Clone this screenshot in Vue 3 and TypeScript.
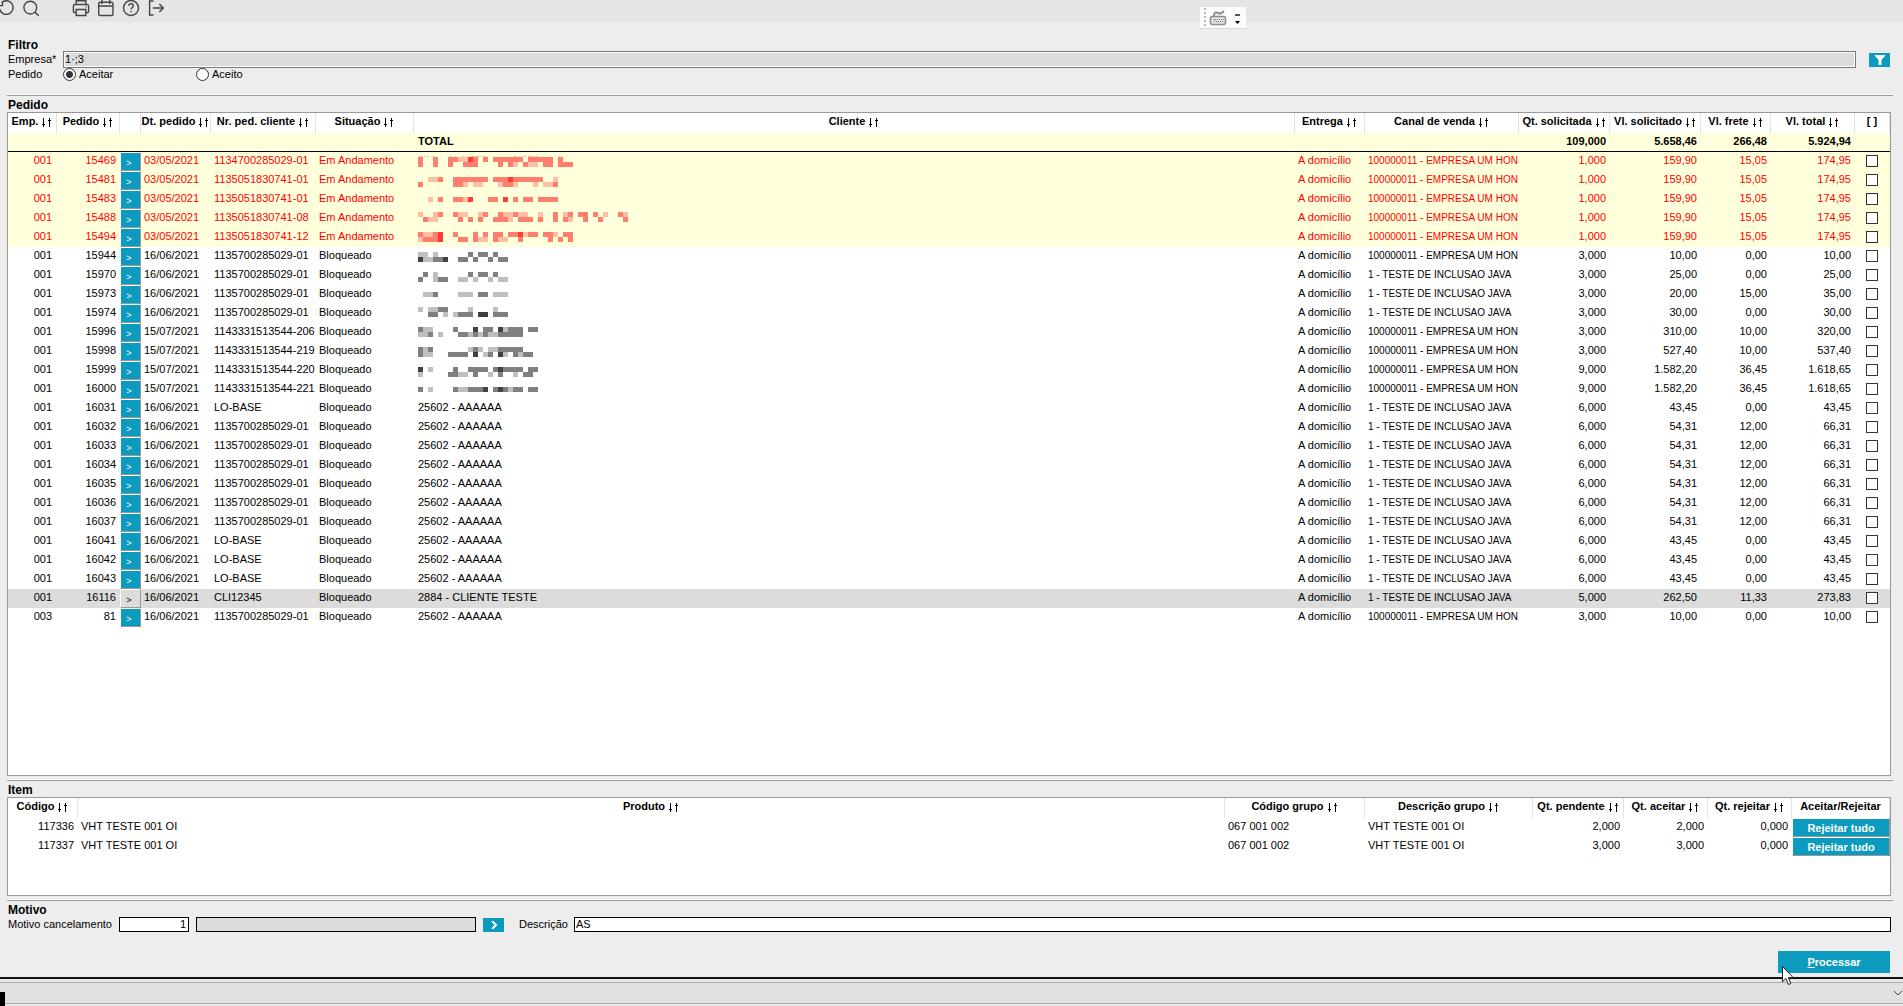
<script setup lang="ts">
import { ref } from 'vue'

interface Order {
  emp: string
  num: string
  date: string
  ref: string
  status: string
  client: string
  channel: string
  qty: string
  value: string
  freight: string
  total: string
}

interface Column {
  key: string
  label: string
  sortable: boolean
}

// Censored customer names: one digit per 5px block, 1 = light, 2 = medium, 3 = dark
interface Mosaic {
  top: number
  lines: string[]
}

const OI = '100000011 - EMPRESA UM HON'
const JAVA = '1 - TESTE DE INCLUSAO JAVA'
const A = '25602 - AAAAAA'
const R = '1135700285029-01'

function order(line: string, client: string, channel: string): Order {
  const [emp, num, date, refNo, status, qty, value, freight, total] = line.split('|')
  return { emp, num, date, ref: refNo, status, client, channel, qty, value, freight, total }
}

const orders: Order[] = [
  order('001|15469|03/05/2021|1134700285029-01|Em Andamento|1,000|159,90|15,05|174,95', '', OI),
  order('001|15481|03/05/2021|1135051830741-01|Em Andamento|1,000|159,90|15,05|174,95', '', OI),
  order('001|15483|03/05/2021|1135051830741-01|Em Andamento|1,000|159,90|15,05|174,95', '', OI),
  order('001|15488|03/05/2021|1135051830741-08|Em Andamento|1,000|159,90|15,05|174,95', '', OI),
  order('001|15494|03/05/2021|1135051830741-12|Em Andamento|1,000|159,90|15,05|174,95', '', OI),
  order(`001|15944|16/06/2021|${R}|Bloqueado|3,000|10,00|0,00|10,00`, '', OI),
  order(`001|15970|16/06/2021|${R}|Bloqueado|3,000|25,00|0,00|25,00`, '', JAVA),
  order(`001|15973|16/06/2021|${R}|Bloqueado|3,000|20,00|15,00|35,00`, '', JAVA),
  order(`001|15974|16/06/2021|${R}|Bloqueado|3,000|30,00|0,00|30,00`, '', JAVA),
  order('001|15996|15/07/2021|1143331513544-206|Bloqueado|3,000|310,00|10,00|320,00', '', OI),
  order('001|15998|15/07/2021|1143331513544-219|Bloqueado|3,000|527,40|10,00|537,40', '', OI),
  order('001|15999|15/07/2021|1143331513544-220|Bloqueado|9,000|1.582,20|36,45|1.618,65', '', OI),
  order('001|16000|15/07/2021|1143331513544-221|Bloqueado|9,000|1.582,20|36,45|1.618,65', '', OI),
  order('001|16031|16/06/2021|LO-BASE|Bloqueado|6,000|43,45|0,00|43,45', A, JAVA),
  order(`001|16032|16/06/2021|${R}|Bloqueado|6,000|54,31|12,00|66,31`, A, JAVA),
  order(`001|16033|16/06/2021|${R}|Bloqueado|6,000|54,31|12,00|66,31`, A, JAVA),
  order(`001|16034|16/06/2021|${R}|Bloqueado|6,000|54,31|12,00|66,31`, A, JAVA),
  order(`001|16035|16/06/2021|${R}|Bloqueado|6,000|54,31|12,00|66,31`, A, JAVA),
  order(`001|16036|16/06/2021|${R}|Bloqueado|6,000|54,31|12,00|66,31`, A, JAVA),
  order(`001|16037|16/06/2021|${R}|Bloqueado|6,000|54,31|12,00|66,31`, A, JAVA),
  order('001|16041|16/06/2021|LO-BASE|Bloqueado|6,000|43,45|0,00|43,45', A, JAVA),
  order('001|16042|16/06/2021|LO-BASE|Bloqueado|6,000|43,45|0,00|43,45', A, JAVA),
  order('001|16043|16/06/2021|LO-BASE|Bloqueado|6,000|43,45|0,00|43,45', A, JAVA),
  order('001|16116|16/06/2021|CLI12345|Bloqueado|5,000|262,50|11,33|273,83', '2884 - CLIENTE TESTE', JAVA),
  order(`003|81|16/06/2021|${R}|Bloqueado|3,000|10,00|0,00|10,00`, A, OI),
]

const mosaics: Record<string, Mosaic> = {
  '15469': { top: 5, lines: ['2..2..221132.2.222222.22222.2', '2..2..2..222....2.21.211.22.222'] },
  '15481': { top: 6, lines: ['..112..2222222.2223222222..1', '2......221.11...1221...1.112'] },
  '15483': { top: 7, lines: ['..1.2..2213...22.3.2.22.2222'] },
  '15488': { top: 3, lines: ['1..12..211..12..211211..1..2.12.22.2.1..21', '.211....2.2.2..2221.222.2..2.21..2..2....2'] },
  '15494': { top: 4, lines: ['21123..2...2.2.22.223122.221.22', '12223...22.211.211..2.....2.2.2'] },
  '15944': { top: 5, lines: ['11.1......2.22.2', '311223..22.2..2.22'] },
  '15970': { top: 6, lines: ['.2.1......2.22.2', '2..122..11.1..1.11'] },
  '15973': { top: 7, lines: ['.112....111.22.111'] },
  '15974': { top: 3, lines: ['1.1122....1....1', '..22.1.1222.33.222'] },
  '15996': { top: 4, lines: ['211....2...3.22.31222.22', '112.1...2212121122222'] },
  '15998': { top: 5, lines: ['212.......121.1122222', '211...2222.3.12.31.2122'] },
  '15999': { top: 6, lines: ['3.1....2..2222.232222.22', '1.....2211.2..1.2..1.22'] },
  '16000': { top: 7, lines: ['2.1....2112223.232122.22'] },
}

const darkPalette = ['#bfbfbf', '#808080', '#404040']
const redPalette = ['#ffbea6', '#ff7f6e', '#ff3b35']

function blocks(o: Order) {
  const mosaic = mosaics[o.num]
  if (!mosaic) return []
  const palette = o.status === 'Em Andamento' ? redPalette : darkPalette
  const out: { x: number; y: number; fill: string }[] = []
  mosaic.lines.forEach((line, row) => {
    ;[...line].forEach((ch, col) => {
      const level = Number(ch)
      if (level > 0) out.push({ x: col * 5, y: mosaic.top + row * 5, fill: palette[level - 1] })
    })
  })
  return out
}

const orderColumns: Column[] = [
  { key: 'emp', label: 'Emp.', sortable: true },
  { key: 'num', label: 'Pedido', sortable: true },
  { key: 'open', label: '', sortable: false },
  { key: 'date', label: 'Dt. pedido', sortable: true },
  { key: 'ref', label: 'Nr. ped. cliente', sortable: true },
  { key: 'status', label: 'Situação', sortable: true },
  { key: 'client', label: 'Cliente', sortable: true },
  { key: 'delivery', label: 'Entrega', sortable: true },
  { key: 'channel', label: 'Canal de venda', sortable: true },
  { key: 'qty', label: 'Qt. solicitada', sortable: true },
  { key: 'value', label: 'Vl. solicitado', sortable: true },
  { key: 'freight', label: 'Vl. frete', sortable: true },
  { key: 'total', label: 'Vl. total', sortable: true },
  { key: 'check', label: '[ ]', sortable: false },
]

const itemColumns: Column[] = [
  { key: 'code', label: 'Código', sortable: true },
  { key: 'product', label: 'Produto', sortable: true },
  { key: 'group', label: 'Código grupo', sortable: true },
  { key: 'groupname', label: 'Descrição grupo', sortable: true },
  { key: 'pending', label: 'Qt. pendente', sortable: true },
  { key: 'accept', label: 'Qt. aceitar', sortable: true },
  { key: 'reject', label: 'Qt. rejeitar', sortable: true },
  { key: 'action', label: 'Aceitar/Rejeitar', sortable: false },
]

const items = [
  { code: '117336', qty: '2,000' },
  { code: '117337', qty: '3,000' },
]

// Thin down and up arrows drawn pixel by pixel on a 12x9 grid
const sortPath = 'M3 0h1v9h-1zM2 6h3v1h-3zM9 0h1v9h-1zM8 2h3v1h-3z'

const mode = ref('aceitar')
const company = ref('1·;3')
const reasonCode = ref('1')
const reasonName = ref('')
const description = ref('AS')
const selected = ref('16116')
const checked = ref<string[]>([])
</script>

<template>
  <div class="page">
    <header class="toolbar">
      <button class="tool" type="button" aria-label="Desfazer">
        <svg width="18" height="18" viewBox="0 0 18 18"><path d="M4.6 3.6A6.8 6.8 0 1 1 2.6 10" /><path d="M1.5 6.6h4V2.5" /></svg>
      </button>
      <button class="tool" type="button" aria-label="Pesquisar">
        <svg width="18" height="18" viewBox="0 0 18 18"><circle cx="8.3" cy="8.6" r="6.4" /><path d="M13 13.4l3.8 3.3" /></svg>
      </button>
      <span class="tool-gap"></span>
      <button class="tool" type="button" aria-label="Imprimir">
        <svg width="18" height="18" viewBox="0 0 18 18"><path d="M4.2 5.5V1.7h9.6v3.8M4.2 13.5H2.4a1 1 0 0 1-1-1V7a1.5 1.5 0 0 1 1.5-1.5h12.2A1.5 1.5 0 0 1 16.6 7v5.5a1 1 0 0 1-1 1h-1.8" /><path d="M4.2 10.5h9.6v6H4.2z" /><path d="M13.5 7.8h1" /></svg>
      </button>
      <button class="tool" type="button" aria-label="Calendário">
        <svg width="18" height="18" viewBox="0 0 18 18"><rect x="1.7" y="3.2" width="14.3" height="13.3" rx="1.5" /><path d="M1.7 7h14.3M5 1v4M12.7 1v4" /></svg>
      </button>
      <button class="tool" type="button" aria-label="Ajuda">
        <svg width="18" height="18" viewBox="0 0 18 18"><circle cx="9" cy="9" r="7.5" /><path d="M6.8 6.8c0-1.3 1-2.1 2.3-2.1s2.2.8 2.2 2c0 1.7-2.2 1.8-2.2 3.7M9.1 12v1.3" /></svg>
      </button>
      <button class="tool" type="button" aria-label="Sair">
        <svg width="18" height="18" viewBox="0 0 18 18"><path d="M6.5 2H2.6v14h3.9M5.8 9h10.4M12.3 5l4 4-4 4" /></svg>
      </button>
    </header>

    <div class="floating" aria-hidden="true">
      <svg width="46" height="21" viewBox="0 0 46 21">
        <path d="M5 1v20" stroke="#b8b8b8" stroke-width="2" stroke-dasharray="2 2" />
        <path d="M14 9c0-4 2-4 4-3s3 1 6-2" fill="none" stroke="#8c8c8c" stroke-width="2" />
        <rect x="10.5" y="9.500" width="15" height="8" rx="2" fill="#e4e4e4" stroke="#8c8c8c" stroke-width="1.5" />
        <path d="M13 12.500h11M14 14.500h9" stroke="#777" stroke-dasharray="1 1" />
        <path d="M35 8h5" stroke="#555" stroke-width="2" />
        <path d="M35 14h5l-2.500 3z" fill="#000" />
      </svg>
    </div>

    <main class="content">
      <section>
        <h2 class="short">Filtro</h2>
        <div class="company-row">
          <label for="company">Empresa*</label>
          <input id="company" v-model="company" class="company" type="text" />
          <button class="filter" type="button" aria-label="Filtrar">
            <svg width="10" height="10" viewBox="0 0 10 10"><path d="M0 0h10v1L6.5 5v5h-3V5L0 1z" fill="#fff" /></svg>
          </button>
        </div>
        <div class="radio-row">
          <span class="radio-title">Pedido</span>
          <label class="radio"><input v-model="mode" type="radio" name="mode" value="aceitar" />Aceitar</label>
          <label class="radio"><input v-model="mode" type="radio" name="mode" value="aceito" />Aceito</label>
        </div>
      </section>
      <hr class="wide-gap" />

      <section class="orders">
        <h2>Pedido</h2>
        <div class="grid grow">
          <table>
            <colgroup>
              <col v-for="c in orderColumns" :key="c.key" :class="'w-' + c.key" />
            </colgroup>
            <thead>
              <tr>
                <th v-for="c in orderColumns" :key="c.key">
                  {{ c.label }}
                  <svg v-if="c.sortable" class="sort" width="12" height="9" viewBox="0 0 12 9" shape-rendering="crispEdges"><path :d="sortPath" /></svg>
                </th>
              </tr>
              <tr class="totals">
                <td colspan="6"></td>
                <td class="client">TOTAL</td>
                <td colspan="2"></td>
                <td class="num">109,000</td>
                <td class="num">5.658,46</td>
                <td class="num">266,48</td>
                <td class="num">5.924,94</td>
                <td></td>
              </tr>
            </thead>
            <tbody>
              <tr
                v-for="o in orders"
                :key="o.num"
                :class="{ pending: o.status === 'Em Andamento', selected: o.num === selected }"
                @click="selected = o.num"
              >
                <td class="num emp">{{ o.emp }}</td>
                <td class="num">{{ o.num }}</td>
                <td class="cell-button"><button class="open" type="button">&gt;</button></td>
                <td>{{ o.date }}</td>
                <td>{{ o.ref }}</td>
                <td>{{ o.status }}</td>
                <td class="client" :class="{ hidden: mosaics[o.num] }">
                  <svg v-if="mosaics[o.num]" class="mosaic" width="210" height="19" shape-rendering="crispEdges" role="img" aria-label="Cliente oculto">
                    <rect v-for="(b, i) in blocks(o)" :key="i" :x="b.x" :y="b.y" width="5" height="5" :fill="b.fill" />
                    <path v-if="o.num === '15469'" d="M1 4.5h148" stroke="#ffbea6" stroke-dasharray="4 1 5 2 3 16 1 4 1 6 3 2 1 3" />
                  </svg>
                  <template v-else>{{ o.client }}</template>
                </td>
                <td>A domicílio</td>
                <td class="channel">{{ o.channel }}</td>
                <td class="num">{{ o.qty }}</td>
                <td class="num">{{ o.value }}</td>
                <td class="num">{{ o.freight }}</td>
                <td class="num">{{ o.total }}</td>
                <td class="cell-check"><input v-model="checked" type="checkbox" :value="o.num" :aria-label="'Selecionar pedido ' + o.num" /></td>
              </tr>
            </tbody>
          </table>
        </div>
      </section>
      <hr />

      <section>
        <h2>Item</h2>
        <div class="grid items">
          <table>
            <colgroup>
              <col v-for="c in itemColumns" :key="c.key" :class="'w-' + c.key" />
            </colgroup>
            <thead>
              <tr>
                <th v-for="c in itemColumns" :key="c.key">
                  {{ c.label }}
                  <svg v-if="c.sortable" class="sort" width="12" height="9" viewBox="0 0 12 9" shape-rendering="crispEdges"><path :d="sortPath" /></svg>
                </th>
              </tr>
            </thead>
            <tbody>
              <tr v-for="i in items" :key="i.code">
                <td class="num">{{ i.code }}</td>
                <td>VHT TESTE 001 OI</td>
                <td>067 001 002</td>
                <td>VHT TESTE 001 OI</td>
                <td class="num">{{ i.qty }}</td>
                <td class="num">{{ i.qty }}</td>
                <td class="num">0,000</td>
                <td class="cell-button"><button class="reject" type="button">Rejeitar tudo</button></td>
              </tr>
            </tbody>
          </table>
        </div>
      </section>
      <hr />

      <section>
        <h2>Motivo</h2>
        <div class="reason-row">
          <label for="reason" class="reason-label">Motivo cancelamento</label>
          <input id="reason" v-model="reasonCode" class="box code" type="text" />
          <input v-model="reasonName" class="box name" type="text" readonly aria-label="Nome do motivo" />
          <button class="lookup" type="button" aria-label="Buscar motivo">
            <svg width="8" height="8" viewBox="0 0 8 8"><path d="M2 0l4 4-4 4" fill="none" stroke="#fff" stroke-width="2" /></svg>
          </button>
          <label for="description" class="description-label">Descrição</label>
          <input id="description" v-model="description" class="box description" type="text" />
        </div>
      </section>

      <div class="actions">
        <button class="process" type="button"><u>P</u>rocessar</button>
        <svg class="pointer" width="13" height="20" viewBox="0 0 13 20"><path d="M0.5 0.5v15.3l3.4-3.3 2.6 6 2.3-1-2.5-5.8h5z" fill="#fff" stroke="#222" /></svg>
      </div>
    </main>

    <footer class="status">
      <div class="status-bar">
        <svg width="10" height="6" viewBox="0 0 10 6"><path d="M1 1l4 4 4-4" fill="none" stroke="#444" /></svg>
      </div>
      <span class="mark"></span>
    </footer>
  </div>
</template>

<style>
body {
  margin: 0;
  background: #ededed;
}
</style>

<style scoped>
.page {
  position: relative;
  display: flex;
  flex-direction: column;
  box-sizing: border-box;
  min-height: 100vh;
  overflow: hidden;
  background: #ededed;
  color: #000;
  font: 11px/17px "Liberation Sans", Arial, sans-serif;
}
button,
input {
  box-sizing: border-box;
  margin: 0;
  padding: 0;
  border: 0;
  border-radius: 0;
  color: inherit;
  font: inherit;
}
.toolbar {
  display: flex;
  align-items: flex-start;
  height: 22px;
  padding-left: 12px;
  margin-left: -19px;
  background: #e5e5e5;
}
.tool {
  flex: none;
  width: 25px;
  height: 17px;
  background: none;
}
.tool svg {
  display: block;
  margin: -1px auto 0;
  fill: none;
  stroke: #444;
  stroke-width: 1.4;
}
.tool-gap {
  width: 25px;
}
.floating {
  position: absolute;
  top: 7px;
  left: 1200px;
  height: 21px;
  background: #fcfcfc;
  border-bottom: 1px solid #d9d9d9;
}
.floating svg {
  display: block;
}
.content {
  flex: 1;
  display: flex;
  flex-direction: column;
  padding: 15px 10px 4px 7px;
}
h2 {
  height: 16px;
  margin: 0;
  padding-left: 1px;
  font-size: 12px;
  line-height: 18px;
}
h2.short {
  height: 14px;
  line-height: 16px;
}
hr {
  box-sizing: border-box;
  width: 100%;
  height: 2px;
  margin: 3px 0 0;
  border: 0;
  border-top: 1px solid #fff;
  border-bottom: 1px solid #999;
}
hr.wide-gap {
  margin-top: 13px;
}
.company-row {
  display: flex;
  align-items: center;
  height: 17px;
  padding-right: 3px;
}
.company-row label,
.radio-title {
  flex: none;
  width: 55px;
  padding-left: 1px;
}
.company {
  flex: 1;
  height: 17px;
  padding-left: 1px;
  border: 1px solid #7a7a7a;
  box-shadow: inset 0 0 0 1px #fff;
  background: #dcdcdc;
}
.filter {
  display: flex;
  align-items: center;
  justify-content: center;
  width: 21px;
  height: 14px;
  margin-left: 13px;
  background: #0c9bbf;
}
.radio-row {
  display: flex;
  align-items: center;
  height: 13px;
  line-height: 13px;
}
.radio {
  display: flex;
  align-items: center;
  gap: 3px;
  width: 133px;
}
.radio input {
  appearance: none;
  width: 13px;
  height: 13px;
  border: 1px solid #333;
  border-radius: 50%;
  background: #fff;
}
.radio input:checked {
  background: radial-gradient(circle, #333 3px, #fff 4px);
}
.orders {
  flex: 1;
  display: flex;
  flex-direction: column;
}
.grid {
  box-sizing: border-box;
  margin-right: 2px;
  border: 1px solid #999;
  background: #fff;
}
.grow {
  flex: 1;
}
.items {
  height: 99px;
}
table {
  width: 100%;
  table-layout: fixed;
  border-collapse: separate;
  border-spacing: 0;
}
th,
td {
  box-sizing: border-box;
  overflow: hidden;
  white-space: nowrap;
  padding: 0 0 2px 3px;
  text-align: left;
}
th {
  height: 20px;
  padding: 0 0 3px;
  border-right: 1px solid #e2e2e2;
  text-align: center;
}
.sort {
  margin-left: -1px;
  vertical-align: -2px;
}
.num {
  padding: 0 4px 2px 0;
  text-align: right;
}
.emp {
  padding-right: 5px;
}
td.client {
  padding-left: 4px;
}
td.hidden {
  padding-bottom: 0;
}
.channel {
  font-size: 10px;
}
.totals td {
  height: 19px;
  padding-bottom: 1px;
  border-bottom: 1px solid #000;
  background: #ffffdc;
  font-weight: bold;
}
tbody tr {
  height: 19px;
}
.pending td {
  background: #ffffdc;
  color: #f00;
}
.selected td {
  background: #dcdcdc;
}
.mosaic {
  display: block;
}
td.cell-button {
  padding: 0;
}
.open,
.reject {
  display: block;
  width: 100%;
  height: 19px;
  border: 1px solid #fff;
  border-right-color: #999;
  border-bottom-color: #999;
  background: #0c9bbf;
  color: #fff;
}
.open {
  padding: 3px 3px 0 0;
  font-size: 9px;
  line-height: 14px;
}
.selected .open {
  background: #dcdcdc;
  color: #000;
}
.reject {
  padding-top: 1px;
  font-weight: bold;
  line-height: 16px;
}
td.cell-check {
  padding: 0;
}
.cell-check input {
  appearance: none;
  display: block;
  width: 12px;
  height: 12px;
  margin: 0 0 2px 11px;
  border: 1px solid #333;
  background: #fff;
}
.cell-check input:checked {
  box-shadow: inset 0 0 0 2px #fff;
  background: #333;
}
.w-emp { width: 49px; }
.w-num { width: 63px; }
.w-open { width: 21px; }
.w-date { width: 70px; }
.w-ref { width: 105px; }
.w-status { width: 98px; }
.w-delivery { width: 70px; }
.w-channel { width: 154px; }
.w-qty { width: 91px; }
.w-value { width: 91px; }
.w-freight { width: 70px; }
.w-total { width: 84px; }
.w-check { width: 35px; }
.w-code { width: 70px; }
.w-group { width: 140px; }
.w-groupname { width: 168px; }
.w-pending { width: 91px; }
.w-accept { width: 84px; }
.w-reject { width: 84px; }
.w-action { width: 98px; }
.reason-row {
  display: flex;
  align-items: center;
  height: 15px;
  padding-right: 2px;
}
.reason-label {
  flex: none;
  width: 111px;
  padding-left: 1px;
}
.box {
  height: 15px;
  padding: 0 1px;
  border: 1px solid #000;
  background: #fff;
}
.code {
  width: 70px;
  padding-right: 2px;
  text-align: right;
}
.name {
  width: 280px;
  margin-left: 7px;
  background: #dcdcdc;
}
.lookup {
  display: flex;
  align-items: center;
  justify-content: center;
  width: 21px;
  height: 14px;
  margin-left: 7px;
  background: #0c9bbf;
}
.description-label {
  width: 55px;
  margin-left: 15px;
}
.description {
  flex: 1;
}
.actions {
  position: relative;
  z-index: 1;
  display: flex;
  justify-content: flex-end;
  margin-top: 19px;
  padding-right: 3px;
}
.process {
  width: 112px;
  height: 22px;
  background: #0c9bbf;
  color: #fff;
  font-weight: bold;
}
.pointer {
  position: absolute;
  top: 15px;
  right: 98px;
}
.status {
  position: relative;
  height: 29px;
  background: #e8e8e8;
  box-sizing: border-box;
  padding-top: 3px;
  border-top: 2px solid #111;
}
.status-bar {
  display: flex;
  align-items: center;
  justify-content: flex-end;
  height: 20px;
  border-top: 1px solid #aaa;
  border-bottom: 1px solid #aaa;
  background: #e1e1e1;
}
.mark {
  position: absolute;
  bottom: 0;
  left: 0;
  width: 5px;
  height: 14px;
  background: #000;
}
</style>
